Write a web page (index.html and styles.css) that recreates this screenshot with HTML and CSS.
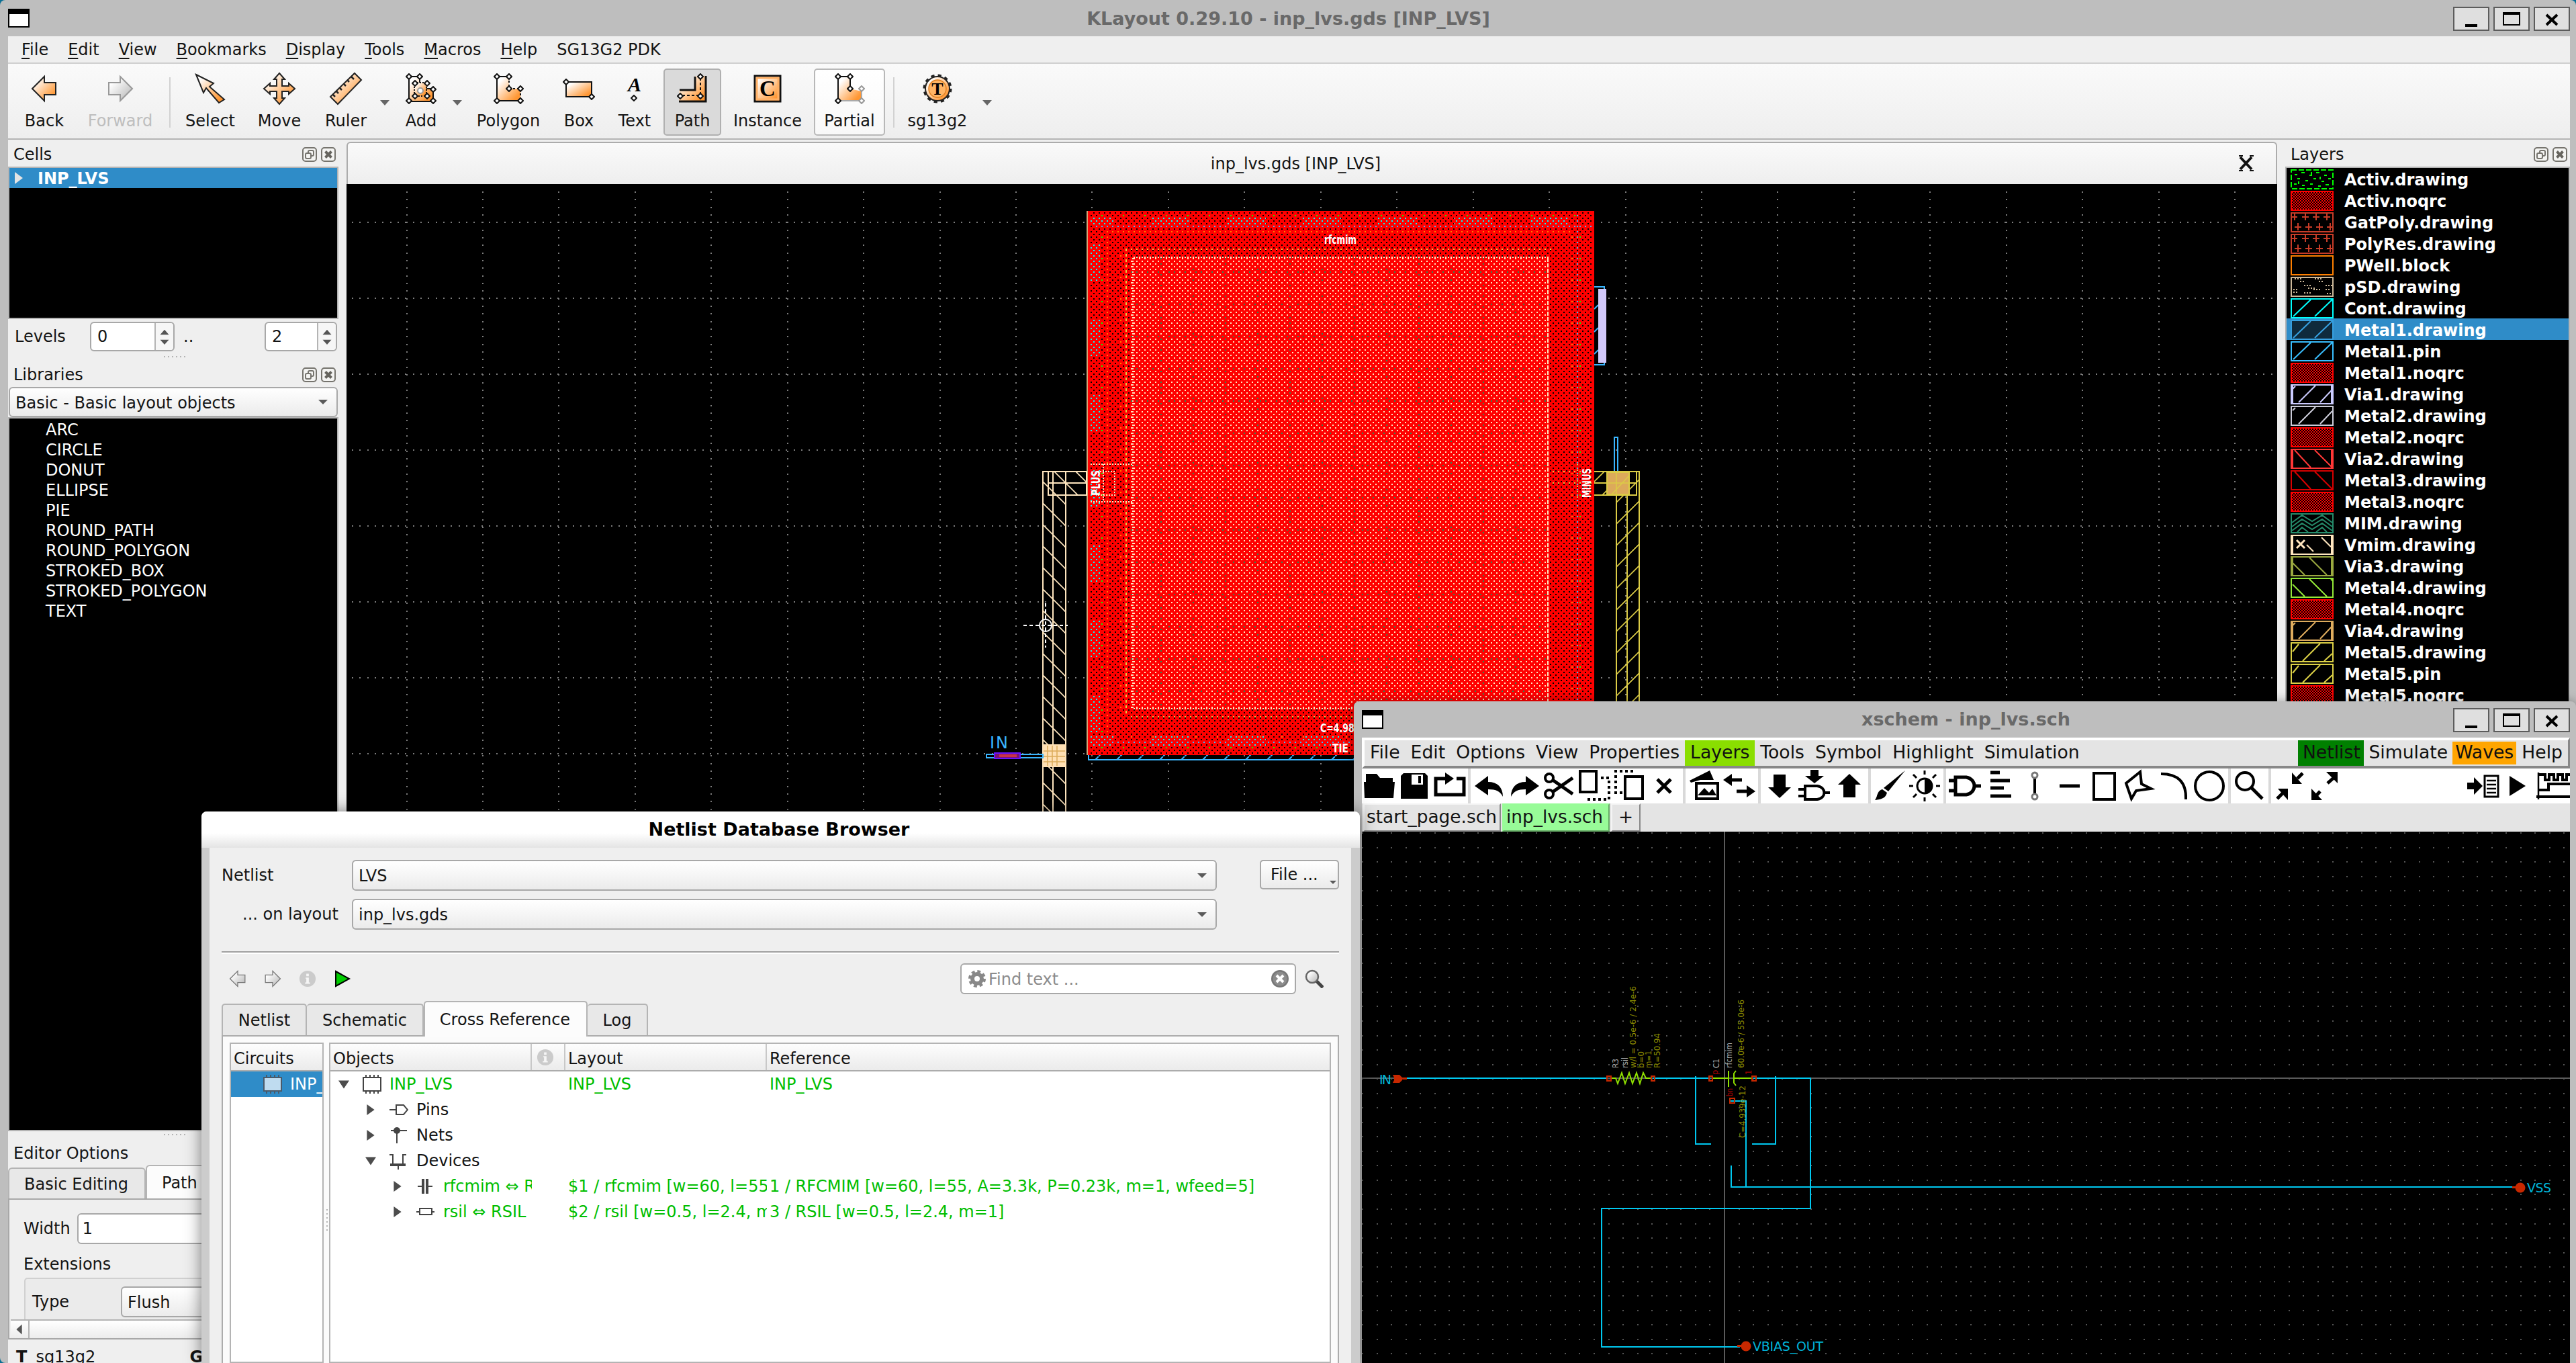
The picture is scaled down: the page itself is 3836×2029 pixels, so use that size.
FILE: index.html
```html
<!DOCTYPE html>
<html lang="en">
<head>
<meta charset="utf-8">
<title>KLayout 0.29.10 - inp_lvs.gds [INP_LVS]</title>
<link rel="stylesheet" href="styles.css">
</head>
<body>
<svg class="defs" aria-hidden="true">
  <defs>
    <linearGradient id="og" x1="0" y1="0" x2="1" y2="1"><stop offset="0.15" stop-color="#fff"/><stop offset="0.85" stop-color="#ff9632"/></linearGradient>
    <linearGradient id="gg" x1="0" y1="0" x2="1" y2="1"><stop offset="0.2" stop-color="#fff"/><stop offset="0.9" stop-color="#bbb"/></linearGradient>
    <pattern id="p-chk" width="8" height="4" patternUnits="userSpaceOnUse"><path d="M0 0h2v2h-2zM4 0h2v2h-2zM2 2h2v2h-2zM6 2h2v2h-2z" fill="#f00"/></pattern>
    <symbol id="float" viewBox="0 0 22 22"><rect x="1" y="1" width="20" height="20" rx="4" fill="#f4f4f2" stroke="#76746e" stroke-width="2"/><rect x="9" y="5" width="8" height="8" rx="2" fill="none" stroke="#76746e" stroke-width="2"/><rect x="5" y="9" width="8" height="8" rx="2" fill="#f4f4f2" stroke="#76746e" stroke-width="2"/></symbol>
    <symbol id="shut" viewBox="0 0 22 22"><rect x="1" y="1" width="20" height="20" rx="4" fill="#f4f4f2" stroke="#76746e" stroke-width="2"/><path d="M6.500 6.500l9 9M15.500 6.500l-9 9" stroke="#66645e" stroke-width="4"/></symbol>
    <symbol id="s-noqrc" viewBox="0 0 64 30"><rect width="64" height="30" fill="url(#p-chk)" shape-rendering="crispEdges"/><rect x="1" y="1" width="62" height="28" fill="none" stroke="#f00" stroke-width="2"/></symbol>
    <symbol id="s-poly" viewBox="0 0 64 30"><g stroke="#c83c28" stroke-width="2" fill="none"><rect x="1" y="1" width="62" height="28"/><path d="M2 7h8M6 2v10M17 7h10M22 2v10M33 7h10M38 2v10M49 7h10M54 2v10M6 22h10M11 16v11M22 22h10M27 16v11M38 22h10M43 16v11M54 22h8M59 16v11"/></g></symbol>
    <symbol id="s-up" viewBox="0 0 64 30"><rect x="1" y="1" width="62" height="28"/><path d="M4 27L30 2M36 27L62 2"/></symbol>
    <symbol id="s-up2" viewBox="0 0 64 30"><rect x="1" y="1" width="62" height="28"/><path d="M12 27L37 2M44 27L62 8M3 7L7 3"/></symbol>
    <symbol id="s-up3" viewBox="0 0 64 30"><rect x="1" y="1" width="62" height="28"/><path d="M18 28L44 2M50 28L62 17M3 14L12 3"/></symbol>
    <symbol id="s-dn" viewBox="0 0 64 30"><rect x="1" y="1" width="62" height="28"/><path d="M6 2L30 28M36 2L62 28"/></symbol>
    <symbol id="s-dn2" viewBox="0 0 64 30"><rect x="1" y="1" width="62" height="28"/><path d="M3 10L21 28M28 2L54 28M60 2l3 3"/></symbol>
    <symbol id="s-side" viewBox="0 0 64 30"><path d="M2 0v30M62 0v30" stroke-width="4"/></symbol>
    <symbol id="wm" viewBox="0 0 54 36"><rect x="1" y="1" width="52" height="34" fill="#dfdfdf" stroke="#5c5c5c" stroke-width="2"/></symbol>
    <symbol id="left" viewBox="0 0 40 44"><path d="M2 22L20 4v9h17v18H20v9z" stroke-width="2"/></symbol>
    <symbol id="right" viewBox="0 0 40 44"><path d="M38 22L20 4v9H3v18h17v9z" stroke-width="2"/></symbol>
    <symbol id="node" viewBox="0 0 10 10"><path d="M5 1l4 4-4 4-4-4z" stroke-width="2" fill="#fff"/></symbol>
    <symbol id="info" viewBox="0 0 28 28"><circle cx="14" cy="14" r="13" fill="#cbcbcb"/><path d="M12 6h4v4h-4zM11 12h5v8h2v2h-8v-2h2v-6h-1z" fill="#f6f6f6"/></symbol>
  </defs>
</svg>

<section class="klayout">
  <header class="titlebar">
    <span class="sysmenu"></span>
    <h1 class="title">KLayout 0.29.10 - inp_lvs.gds [INP_LVS]</h1>
    <div class="winbtns">
      <svg class="winbtn"><use href="#wm"/><path d="M18 26h18v4h-18z"/></svg>
      <svg class="winbtn"><use href="#wm"/><path d="M14 8h26v20h-26zM16 12v14h22v-14z" fill-rule="evenodd"/></svg>
      <svg class="winbtn"><use href="#wm"/><path d="M19 12l16 15M35 12l-16 15" stroke="#000" stroke-width="4"/></svg>
    </div>
  </header>
  <nav class="menubar"><span><u>F</u>ile</span><span><u>E</u>dit</span><span><u>V</u>iew</span><span><u>B</u>ookmarks</span><span><u>D</u>isplay</span><span><u>T</u>ools</span><span><u>M</u>acros</span><span><u>H</u>elp</span><span>SG13G2 PDK</span></nav>
  <div class="toolbar">
    <div class="tool"><svg class="ti" viewBox="0 0 44 44"><use href="#left" x="2" width="40" height="44" fill="url(#og)" stroke="#222"/></svg>Back</div>
    <div class="tool off"><svg class="ti" viewBox="0 0 44 44"><use href="#right" x="2" width="40" height="44" fill="url(#gg)" stroke="#999"/></svg>Forward</div>
    <i class="tsep"></i>
    <div class="tool"><svg class="ti" viewBox="0 0 44 44"><path d="M1 1l26 13-6 5 22 19-8 5-19-22-4 7z" fill="url(#og)" stroke="#222" stroke-width="2"/></svg>Select</div>
    <div class="tool"><svg class="ti wide" viewBox="0 0 48 48"><path d="M24 1l8 9h-4v10h10v-4l9 8-9 8v-4H28v10h4l-8 9-8-9h4V28H10v4l-9-8 9-8v4h10V10h-4z" fill="url(#og)" stroke="#222" stroke-width="2"/></svg>Move</div>
    <div class="tool"><svg class="ti wide" viewBox="0 0 48 48"><path d="M37 1l10 10L12 47 1 36z" fill="url(#og)" stroke="#222" stroke-width="2"/><path d="M32 6l4 4M26 11l3 3M21 17l3 3M15 23l3 3M10 28l3 3M5 33l3 3" stroke="#222" stroke-width="2.500"/></svg>Ruler</div>
    <i class="drop"></i>
    <div class="tool"><svg class="ti" viewBox="0 0 44 44"><g stroke="#111" fill="url(#og)"><path d="M4 4h16v18h20v19H4z" stroke-width="2"/><path d="M12 13h18v20h-18z" stroke-dasharray="2 2" stroke-width="2"/><circle cx="21" cy="25" r="4" stroke="#999" stroke-width="2" fill="#fff"/><use href="#node" x="-1" y="-1" width="10" height="10"/><use href="#node" x="15" y="-1" width="10" height="10"/><use href="#node" x="35" y="18" width="10" height="10"/><use href="#node" x="-1" y="35" width="10" height="10"/><use href="#node" x="35" y="35" width="10" height="10"/><use href="#node" x="8" y="9" width="10" height="10"/><use href="#node" x="26" y="9" width="10" height="10"/><use href="#node" x="8" y="28" width="10" height="10"/><use href="#node" x="26" y="28" width="10" height="10"/></g></svg>Add</div>
    <i class="drop"></i>
    <div class="tool"><svg class="ti" viewBox="0 0 44 44"><g stroke="#111"><path d="M6 4h17v18h17v18H6z" fill="url(#og)" stroke="none"/><path d="M23 4H5v36h35" fill="none" stroke-width="2"/><path d="M5 4h18v18h17v18" fill="none" stroke-width="2" stroke-dasharray="3 3"/><use href="#node" x="0" y="-1" width="10" height="10"/><use href="#node" x="18" y="-1" width="10" height="10"/><use href="#node" x="18" y="17" width="10" height="10"/><use href="#node" x="35" y="17" width="10" height="10"/><use href="#node" x="0" y="35" width="10" height="10"/><use href="#node" x="35" y="35" width="10" height="10"/></g></svg>Polygon</div>
    <div class="tool"><svg class="ti" viewBox="0 0 44 44"><g stroke="#111"><rect x="3" y="12" width="38" height="22" fill="url(#og)" stroke-width="2"/><use href="#node" x="-2" y="7" width="10" height="10"/><use href="#node" x="36" y="29" width="10" height="10"/></g></svg>Box</div>
    <div class="tool"><svg class="ti" viewBox="0 0 44 44"><text x="22" y="26" class="glyph-a">A</text><g stroke="#111"><use href="#node" x="16" y="31" width="10" height="10"/></g></svg>Text</div>
    <div class="tool pressed"><svg class="ti" viewBox="0 0 44 44"><path d="M26 3h16v38H2V24h24z" fill="url(#og)"/><path d="M26 4v20H3M42 3v38H2" fill="none" stroke="#111" stroke-width="3"/><path d="M34 6v26H4" fill="none" stroke="#111" stroke-width="2" stroke-dasharray="4 3"/><g stroke="#111"><use href="#node" x="29" y="-1" width="10" height="10"/><use href="#node" x="29" y="28" width="10" height="10"/><use href="#node" x="-1" y="28" width="10" height="10"/></g></svg>Path</div>
    <div class="tool"><svg class="ti" viewBox="0 0 44 44"><rect x="3" y="3" width="38" height="38" fill="url(#og)" stroke="#111" stroke-width="3"/><rect x="6" y="6" width="32" height="32" fill="none" stroke="#ffb066" stroke-width="3"/><text x="22" y="33" class="glyph-c">C</text></svg>Instance</div>
    <div class="tool raised"><svg class="ti" viewBox="0 0 44 44"><path d="M6 4h17v18l17 4v14H6z" fill="url(#og)"/><path d="M40 22V40H6" fill="none" stroke="#aaa" stroke-width="2"/><path d="M5 40V4h18v18" fill="none" stroke="#111" stroke-width="2"/><g stroke="#111"><use href="#node" x="0" y="-1" width="10" height="10"/><use href="#node" x="18" y="-1" width="10" height="10"/><use href="#node" x="18" y="17" width="10" height="10"/><use href="#node" x="0" y="35" width="10" height="10"/></g><g stroke="#999"><use href="#node" x="35" y="17" width="10" height="10"/><use href="#node" x="35" y="35" width="10" height="10"/></g></svg>Partial</div>
    <i class="tsep"></i>
    <div class="tool"><svg class="ti" viewBox="0 0 44 44"><circle cx="22" cy="22" r="19" fill="none" stroke="#222" stroke-width="5" stroke-dasharray="5 4.950"/><circle cx="22" cy="22" r="18" fill="url(#og)" stroke="#222" stroke-width="2"/><circle cx="22" cy="22" r="13" fill="#ffb566" stroke="#e08020" stroke-width="1.500"/><text x="22" y="31" class="glyph-t">T</text></svg>sg13g2</div>
    <i class="drop"></i>
  </div>

  <div class="work">
    <aside class="dock left">
      <div class="dockhead">Cells<span><svg><use href="#float"/></svg><svg><use href="#shut"/></svg></span></div>
      <div class="cells"><div class="cellrow"><svg viewBox="0 0 12 18"><path d="M0 0l12 9-12 9z" fill="#e4e4e4"/></svg>INP_LVS</div></div>
      <div class="levels"><span class="lbl">Levels</span><div class="spin a"><b>0</b><svg viewBox="0 0 28 40"><path d="M14 9l7 8H7zM14 33l7-8H7z" fill="#555"/></svg></div><span class="dots">..</span><div class="spin b"><b>2</b><svg viewBox="0 0 28 40"><path d="M14 9l7 8H7zM14 33l7-8H7z" fill="#555"/></svg></div></div>
      <div class="grip"></div>
      <div class="dockhead lib">Libraries<span><svg><use href="#float"/></svg><svg><use href="#shut"/></svg></span></div>
      <div class="combo">Basic - Basic layout objects<i class="tri"></i></div>
      <ul class="liblist"><li>ARC</li><li>CIRCLE</li><li>DONUT</li><li>ELLIPSE</li><li>PIE</li><li>ROUND_PATH</li><li>ROUND_POLYGON</li><li>STROKED_BOX</li><li>STROKED_POLYGON</li><li>TEXT</li></ul>
      <div class="grip low"></div>
      <div class="dockhead ed">Editor Options</div>
      <div class="edtabs"><span>Basic Editing</span><span class="on">Path</span></div>
      <div class="edpane">
        <div class="edrow"><span>Width</span><div class="input">1</div></div>
        <div class="edext">Extensions</div>
        <div class="edgroup"><span>Type</span><div class="combo">Flush</div></div>
        <div class="hscroll"><svg viewBox="0 0 28 28"><path d="M18 6v16L9 14z" fill="#555"/></svg></div>
      </div>
      <div class="status"><b>T</b><span>sg13g2</span><b class="g">G</b></div>
    </aside>

    <main class="view">
      <div class="viewtab"><span>inp_lvs.gds [INP_LVS]</span><svg viewBox="0 0 24 24"><path d="M3 3L20 21M20 3L3 21" stroke="#111" stroke-width="4"/><path d="M1 1h6M17 1h6M1 23h6M17 23h6" stroke="#111" stroke-width="2"/></svg></div>
      <svg class="layout" viewBox="516 274 2875 1755">
        <defs>
          <pattern id="pk" width="8" height="8" patternUnits="userSpaceOnUse"><path d="M0 0h2v2h-2zM4 4h2v2h-2z" fill="#000"/></pattern>
          <pattern id="pc" width="8" height="8" patternUnits="userSpaceOnUse"><path d="M0 0h2v2h-2zM4 4h2v2h-2z" fill="#00ffff"/></pattern>
          <pattern id="pw" width="8" height="8" patternUnits="userSpaceOnUse"><rect width="8" height="8" fill="#f00"/><path d="M0 0h2v2h-2zM4 4h2v2h-2z" fill="#ffe6bf"/></pattern>
          <pattern id="pm" width="96" height="96" patternUnits="userSpaceOnUse"><path d="M0 0h2v2h-2zM0 8h2v2h-2zM0 24h2v2h-2zM0 40h2v2h-2zM0 56h2v2h-2zM0 72h2v2h-2zM0 88h2v2h-2zM48 16h2v2h-2zM48 32h2v2h-2zM48 56h2v2h-2zM48 80h2v2h-2zM12 20h2v2h-2zM20 20h2v2h-2zM36 20h2v2h-2zM52 20h2v2h-2zM60 20h2v2h-2zM76 20h2v2h-2zM92 20h2v2h-2zM12 68h2v2h-2zM28 68h2v2h-2zM44 68h2v2h-2zM60 68h2v2h-2zM84 68h2v2h-2z" fill="#288c5a"/></pattern>
          <pattern id="hd" width="32" height="32" x="1552" y="716" patternUnits="userSpaceOnUse"><path d="M0 0L32 32M-1 31l2 2M31 -1l2 2" stroke="#ffe6bf" stroke-width="1.600"/></pattern>
          <pattern id="hu" width="32" height="32" x="2407" y="716" patternUnits="userSpaceOnUse"><path d="M0 32L32 0M-1 1l2-2M31 33l2-2" stroke="#dccc46" stroke-width="1.600"/></pattern>
          <pattern id="hb" width="32" height="32" x="1636" y="1094" patternUnits="userSpaceOnUse"><path d="M0 32L32 0" stroke="#3ab6ff" stroke-width="2"/></pattern>
        </defs>
        <rect x="516" y="274" width="2875" height="1755" fill="#000"/>
        <path id="grid" fill="none" stroke="#7d7d7d" stroke-width="2" stroke-dasharray="2 9.340" shape-rendering="crispEdges"/>
        <g shape-rendering="crispEdges">
          <rect x="1618" y="314" width="756" height="810" fill="#f00"/>
          <rect x="1618" y="314" width="2" height="810" fill="#d2a679"/>
          <rect x="1624" y="316" width="748" height="806" fill="url(#pk)"/>
          <path id="contacts"/>
          <g fill="none" stroke-width="2">
            <path d="M1640 321H2370M1641 352V1110M2353 352V1110M1640 1113H2370" stroke="#0f0" stroke-dasharray="2 30"/>
            <path d="M1632 337H2370M2349 320V1110M1632 1105H2370" stroke="#3ab6ff" stroke-dasharray="2 6"/>
            <path d="M1648 345H2340M1649 352V1092" stroke="#ff7a00" stroke-dasharray="2 6"/>
            <path d="M1684 1097H2340M2341 352V1092M1669 380V1060" stroke="#ff7a00" stroke-dasharray="2 30"/>
            <path d="M1676 371H2314M1684 1067H2314" stroke="#d8cc46" stroke-dasharray="2 6"/>
            <path d="M1677 370V1064" stroke="#d8cc46" stroke-dasharray="4 4"/>
          </g>
          <rect x="1684" y="382" width="624" height="674" fill="url(#pw)"/>
          <rect x="1684" y="382" width="624" height="674" fill="url(#pm)"/>
          <path d="M1688 383H2306M1687 384V1055M1688 1055H2306" fill="none" stroke="#ffe6bf" stroke-width="2" stroke-dasharray="2 2"/>
          <path d="M2305 384V1056" stroke="#ffe6bf" stroke-width="2" stroke-dasharray="6 2"/>
          <g fill="none" stroke="#ffe6bf" stroke-width="2" stroke-dasharray="2 2"><path d="M1624 691H1686M1624 747H1686M1634 702H1660V737H1634M1643 691v56"/></g>
          <path d="M2312 702H2372M2312 719H2372M2349 691V747" fill="none" stroke="#d8cc46" stroke-width="2" stroke-dasharray="2 6"/>
        </g>
        <g class="cap">
          <text x="1972" y="363" textLength="48" lengthAdjust="spacingAndGlyphs">rfcmim</text>
          <text x="1966" y="1090" textLength="68" lengthAdjust="spacingAndGlyphs">C=4.985e</text>
          <text x="1984" y="1120" textLength="24" lengthAdjust="spacingAndGlyphs">TIE</text>
          <text transform="translate(1638 738) rotate(-90)" textLength="38" lengthAdjust="spacingAndGlyphs">PLUS</text>
          <text transform="translate(2369 741) rotate(-90)" textLength="44" lengthAdjust="spacingAndGlyphs">MINUS</text>
        </g>
        <g fill="none" stroke="#ffe6bf" stroke-width="2">
          <path d="M1553 702H1618V737H1587V1230H1553z" fill="url(#hd)"/>
          <path d="M1568 737V1230M1561 702V737H1587M1561 719H1618M1568 702v35M1587 702v35"/>
        </g>
        <rect x="1553" y="1108" width="34" height="34" fill="#ffe0b4"/>
        <path d="M1560 1110v30M1567 1110v30M1574 1110v30M1554 1118h32M1554 1126h32M1554 1134h32" stroke="#dcaa5a" stroke-width="1.500"/>
        <g fill="none" stroke="#3ab6ff" stroke-width="2">
          <rect x="1469" y="1123" width="84" height="5"/>
          <path d="M1621 1124v7H2030" fill="none"/><rect x="1621" y="1124" width="410" height="6" fill="url(#hb)" stroke="none"/>
          <path d="M2374 427h15v116h-15M2374 460l6-6M2374 494l6-6M2374 527l6-6"/>
          <rect x="2404" y="651" width="5" height="51"/>
        </g>
        <rect x="1481" y="1121" width="38" height="8" fill="#7a1470" stroke="#6a14ff" stroke-width="2"/>
        <path d="M1488 1125h26" stroke="#c8324a" stroke-width="4"/>
        <text x="1474" y="1114" class="inlabel" textLength="27">IN</text>
        <rect x="2380" y="430" width="12" height="110" fill="#d2c8fa"/>
        <g fill="none" stroke="#dccc46" stroke-width="2">
          <path d="M2374 702H2441V1060H2407V737H2374" fill="url(#hu)"/>
          <path d="M2374 719H2437M2423 737V1060M2437 702V737H2400"/>
          <rect x="2393" y="703" width="33" height="33" fill="#dcaa5a"/>
          <path d="M2393 719h33M2400 736l26-28M2407 703v33" stroke-width="1.500"/>
        </g>
        <g fill="none" stroke="#fff" stroke-width="2"><circle cx="1557" cy="931" r="9"/><path d="M1524 931h66M1557 898v66" stroke-dasharray="5 4"/></g>
      </svg>
    </main>

    <aside class="dock right">
      <div class="dockhead">Layers<span><svg><use href="#float"/></svg><svg><use href="#shut"/></svg></span></div>
      <ul class="layers">
        <li><svg class="c-act" viewBox="0 0 64 30"><rect x="1" y="1" width="62" height="28" stroke-dasharray="8 3"/><path d="M6 8h4M16 5h5M28 9h4M38 5h5M50 9h4M10 14h4M22 17h4M34 14h4M46 18h4M56 14h4M5 22h4M17 24h4M29 22h4M41 25h4M52 23h5M31 4v4M12 18v4M44 11v4"/></svg>Activ.drawing</li>
        <li><svg><use href="#s-noqrc"/></svg>Activ.noqrc</li>
        <li><svg><use href="#s-poly"/></svg>GatPoly.drawing</li>
        <li><svg><use href="#s-poly"/></svg>PolyRes.drawing</li>
        <li><svg class="c-well" viewBox="0 0 64 30"><rect x="1" y="1" width="62" height="28"/></svg>PWell.block</li>
        <li><svg class="c-psd" viewBox="0 0 64 30"><rect x="1" y="1" width="62" height="28"/><path d="M6 3h10M14 7h8M36 3h12M42 7h8M20 13h12M26 17h12M52 13h10M4 19h8M4 23h6M34 19h10M20 24h10M52 19h8M54 25h8" stroke-dasharray="2 2"/></svg>pSD.drawing</li>
        <li><svg class="c-cont"><use href="#s-up"/></svg>Cont.drawing</li>
        <li class="sel"><svg class="c-m1"><use href="#s-up"/></svg>Metal1.drawing</li>
        <li><svg class="c-m1"><use href="#s-up"/></svg>Metal1.pin</li>
        <li><svg><use href="#s-noqrc"/></svg>Metal1.noqrc</li>
        <li><svg class="c-v1"><use href="#s-up2"/><use href="#s-side"/></svg>Via1.drawing</li>
        <li><svg class="c-m2"><use href="#s-up2"/></svg>Metal2.drawing</li>
        <li><svg><use href="#s-noqrc"/></svg>Metal2.noqrc</li>
        <li><svg class="c-v2"><use href="#s-dn"/><use href="#s-side"/></svg>Via2.drawing</li>
        <li><svg class="c-m3"><use href="#s-dn"/></svg>Metal3.drawing</li>
        <li><svg><use href="#s-noqrc"/></svg>Metal3.noqrc</li>
        <li><svg class="c-mim" viewBox="0 0 64 30"><rect x="1" y="1" width="62" height="28"/><path d="M2 14L17 3L32 12L47 3L62 14M2 20L17 9L32 18L47 9L62 20M2 26L17 15L32 24L47 15L62 26M10 28L17 21L26 28M38 28L47 21L54 28"/></svg>MIM.drawing</li>
        <li><svg class="c-vm" viewBox="0 0 64 30"><use href="#s-side"/><rect x="1" y="1" width="62" height="28"/><path d="M46 4L60 18M24 15l10 10"/><path d="M9 8l12 12M21 8L9 20" stroke-width="3"/></svg>Vmim.drawing</li>
        <li><svg class="c-v3"><use href="#s-dn2"/><use href="#s-side"/></svg>Via3.drawing</li>
        <li><svg class="c-m4"><use href="#s-dn2"/></svg>Metal4.drawing</li>
        <li><svg><use href="#s-noqrc"/></svg>Metal4.noqrc</li>
        <li><svg class="c-v4"><use href="#s-up2"/><use href="#s-side"/></svg>Via4.drawing</li>
        <li><svg class="c-m5"><use href="#s-up3"/></svg>Metal5.drawing</li>
        <li><svg class="c-m5"><use href="#s-up3"/></svg>Metal5.pin</li>
        <li><svg><use href="#s-noqrc"/></svg>Metal5.noqrc</li>
      </ul>
    </aside>
  </div>
</section>

<section class="xschem">
  <header class="titlebar">
    <span class="sysmenu"></span>
    <h2 class="title">xschem - inp_lvs.sch</h2>
    <div class="winbtns">
      <svg class="winbtn"><use href="#wm"/><path d="M18 26h18v4h-18z"/></svg>
      <svg class="winbtn"><use href="#wm"/><path d="M14 8h26v20h-26zM16 12v14h22v-14z" fill-rule="evenodd"/></svg>
      <svg class="winbtn"><use href="#wm"/><path d="M19 12l16 15M35 12l-16 15" stroke="#000" stroke-width="4"/></svg>
    </div>
  </header>
  <div class="xbody">
    <nav class="xmenu"><span>File</span><span>Edit</span><span>Options</span><span>View</span><span>Properties</span><span class="lay">Layers</span><span>Tools</span><span>Symbol</span><span>Highlight</span><span>Simulation</span><i></i><span class="net">Netlist</span><span class="sim">Simulate</span><span class="wav">Waves</span><span>Help</span></nav>
    <div class="xtools">
      <svg viewBox="0 0 52 52"><path d="M6 8h16l5 6h19v6H6zM3 20h46l-2 24H4z"/></svg>
      <svg viewBox="0 0 52 52"><path d="M6 11l4-4h32l4 4v34H6zM22 9v15h17V9zM32 11v11h4V11z" fill-rule="evenodd"/></svg>
      <svg viewBox="0 0 52 52"><path d="M20 15H6v24h42V15H37" class="l5"/><path d="M20 6l13 9-13 9z"/></svg>
      <i></i>
      <svg viewBox="0 0 52 52"><path d="M4 26L24 11v9c14 0 22 8 22 22-4-8-10-11-22-11v9z"/></svg>
      <svg viewBox="0 0 52 52"><path d="M48 26L28 11v9C14 20 6 28 6 42c4-8 10-11 22-11v9z"/></svg>
      <svg viewBox="0 0 52 52"><circle cx="11" cy="14" r="6" class="l4"/><circle cx="11" cy="38" r="6" class="l4"/><path d="M16 17l30 21M16 35l30-21" class="l5"/></svg>
      <svg viewBox="0 0 52 52"><rect x="5" y="4" width="24" height="31" class="l4"/><path d="M36 14h12v32H18v-6" class="l4" stroke-dasharray="4 4"/></svg>
      <svg viewBox="0 0 52 52"><rect x="20" y="12" width="26" height="33" class="l4"/><path d="M32 4H6v32h10" class="l4" stroke-dasharray="4 4"/></svg>
      <svg viewBox="0 0 52 52"><path d="M16 16l20 20M36 16L16 36" class="l5"/></svg>
      <i></i>
      <svg viewBox="0 0 52 52"><path d="M4 18L34 3l6 14H20l-14 4z"/><rect x="14" y="22" width="32" height="23" class="l4"/><path d="M16 40l10-11 7 7 5-6 6 10z"/></svg>
      <svg viewBox="0 0 52 52"><path d="M14 17h16M22 34h16" class="l5"/><path d="M2 17l13-9v18zM50 34l-13-9v18z"/></svg>
      <i></i>
      <svg viewBox="0 0 52 52"><path d="M17 9h18v19h8L26 44 9 28h8z"/></svg>
      <svg viewBox="0 0 52 52"><path d="M20 2h12v9h8L26 22 12 11h8z"/><path d="M12 26h18c14 2 14 18 0 20H12zM2 31h10M2 41h10M40 36h9" class="l4"/></svg>
      <svg viewBox="0 0 52 52"><path d="M17 43h18V24h8L26 8 9 24h8z"/></svg>
      <i></i>
      <svg viewBox="0 0 52 52"><path d="M49 3L24 34l-7-5zM15 31l7 5c-2 8-8 10-18 11 4-5 3-14 11-16z"/></svg>
      <svg viewBox="0 0 52 52"><circle cx="26" cy="26" r="11" class="l3"/><path d="M26 14a12 12 0 0 1 0 24z"/><path d="M26 3v6M26 43v6M3 26h6M43 26h6M9 9l5 5M38 38l5 5M43 9l-5 5M9 43l5-5" class="l3"/></svg>
      <i></i>
      <svg viewBox="0 0 52 52"><path d="M12 13h16c16 3 16 23 0 26H12zM2 18h10M2 33h10M41 26h9" class="l5"/></svg>
      <svg viewBox="0 0 52 52"><path d="M12 6h14M12 18h29M12 29h20M12 41h31" class="l5"/></svg>
      <svg viewBox="0 0 52 52"><path d="M26 14v24" class="l4"/><circle cx="26" cy="10" r="4" class="l3 gr"/><circle cx="26" cy="42" r="4" class="l3 gr"/></svg>
      <svg viewBox="0 0 52 52"><path d="M11 26h30" class="l5"/></svg>
      <svg viewBox="0 0 52 52"><rect x="10" y="7" width="31" height="39" class="l4"/></svg>
      <svg viewBox="0 0 52 52"><path d="M27 5l2 18 14 7-22 3-7 12L6 22z" class="l4"/></svg>
      <svg viewBox="0 0 52 52"><path d="M6 8c25 0 38 12 37 38" class="l4"/></svg>
      <svg viewBox="0 0 52 52"><circle cx="26" cy="26" r="21" class="l4"/></svg>
      <i></i>
      <svg viewBox="0 0 52 52"><circle cx="19" cy="19" r="13" class="l4"/><path d="M28 28l17 17" class="l5"/></svg>
      <i></i>
      <svg viewBox="0 0 52 52"><path d="M45 7l-8 8M7 45l8-8" class="l5"/><path d="M29 6v17h15zM8 30h15v17z"/></svg>
      <svg viewBox="0 0 52 52"><path d="M30 22l9-8M9 45l10-11" class="l5"/><path d="M28 5h17v17zM6 30v17h16z"/></svg>
      <b></b>
      <svg viewBox="0 0 52 52"><path d="M3 21h10v-8l13 13-13 13v-8H3z"/><rect x="29" y="11" width="20" height="31" class="l3"/><path d="M32 18h14M32 24h14M32 30h14M32 36h14" class="l2"/></svg>
      <svg viewBox="0 0 52 52"><path d="M14 11l24 15-24 15z"/></svg>
      <svg viewBox="0 0 52 52"><path d="M5 6v40" class="l2"/><path d="M2 42h50M5 32h15V23h32M5 9h10v8h6V9h7v8h6V9h7v8h6V9h5" class="l4"/></svg>
    </div>
    <div class="xtabs"><span>start_page.sch</span><span class="on">inp_lvs.sch</span><span class="plus">+</span></div>
    <svg class="sch" viewBox="2028 1238 1799 791">
      <rect x="2028" y="1238" width="1799" height="791" fill="#000"/>
      <path id="dots" fill="none" stroke="#555" stroke-width="2" stroke-dasharray="2 19.560" shape-rendering="crispEdges"/>
      <path d="M2568 1238V2029M2028 1605H3827" stroke="#5a5a5a" stroke-width="2"/>
      <g fill="none" stroke="#00c8f0" stroke-width="2">
        <path d="M2094 1605H2393M2461 1605H2547M2611 1605H2696V1799H2385V2005H2591M2525 1602V1703H2548M2644 1602V1703H2609M2577 1639H2600V1767M2578 1735V1767H3746"/>
      </g>
      <g fill="none" stroke="#8fe000" stroke-width="2"><path d="M2400 1605h6l3 8 6-16 5 16 6-16 5 16 6-16 5 16 5-16 4 8h8M2550 1605h24M2574 1594v24M2585 1594l-3 4v14l3 4M2582 1605h27"/></g>
      <g fill="none" stroke="#c82800" stroke-width="2"><rect x="2393" y="1602" width="6" height="7"/><rect x="2459" y="1602" width="5" height="7"/><rect x="2545" y="1602" width="5" height="7"/><rect x="2609" y="1602" width="6" height="7"/><rect x="2576" y="1635" width="7" height="7"/></g>
      <g fill="#c82800"><path d="M2074 1600h10l4 4v4l-4 4h-10l2-4v-4zM2088 1604h7v3h-7z"/><circle cx="2600" cy="2004" r="7.500"/><path d="M2587 2002h6v3h-6z"/><circle cx="3753" cy="1768" r="7.500"/><path d="M3741 1766h6v3h-6z"/></g>
      <g class="pins"><text x="2054" y="1614" textLength="18">IN</text><text x="2610" y="2011" textLength="105">VBIAS_OUT</text><text x="3763" y="1775" textLength="36">VSS</text></g>
      <g class="ann y"><text transform="translate(2436 1590) rotate(-90)" textLength="122" lengthAdjust="spacingAndGlyphs">w/l = 0.5e-6 / 2.4e-6</text><text transform="translate(2448 1590) rotate(-90)" textLength="25" lengthAdjust="spacingAndGlyphs">b=0</text><text transform="translate(2459 1590) rotate(-90)" textLength="26" lengthAdjust="spacingAndGlyphs">m=1</text><text transform="translate(2472 1590) rotate(-90)" textLength="52" lengthAdjust="spacingAndGlyphs">R=50.94</text><text transform="translate(2597 1590) rotate(-90)" textLength="102" lengthAdjust="spacingAndGlyphs">60.0e-6 / 55.0e-6</text><text transform="translate(2599 1694) rotate(-90)" textLength="78" lengthAdjust="spacingAndGlyphs">C=4.939e-12</text></g>
      <g class="ann w"><text transform="translate(2410 1590) rotate(-90)" textLength="14" lengthAdjust="spacingAndGlyphs">R3</text><text transform="translate(2424 1590) rotate(-90)" textLength="16" lengthAdjust="spacingAndGlyphs">rsil</text><text transform="translate(2560 1590) rotate(-90)" textLength="14" lengthAdjust="spacingAndGlyphs">C1</text><text transform="translate(2579 1590) rotate(-90)" textLength="38" lengthAdjust="spacingAndGlyphs">rfcmim</text></g>
      <g class="ann r"><text transform="translate(2558 1600) rotate(-90)">p</text><text transform="translate(2608 1600) rotate(-90)">1</text><text transform="translate(2580 1632) rotate(-90)" textLength="12" lengthAdjust="spacingAndGlyphs">bn</text></g>
    </svg>
  </div>
</section>

<section class="netlist">
  <header class="ntitle">Netlist Database Browser</header>
  <div class="nbody">
    <div class="frow"><label>Netlist</label><div class="combo">LVS<i class="tri"></i></div><div class="filebtn">File ...<i class="tri sm"></i></div></div>
    <div class="frow two"><label>... on layout</label><div class="combo">inp_lvs.gds<i class="tri"></i></div></div>
    <hr>
    <div class="nbar">
      <svg viewBox="0 0 28 28"><use href="#left" width="28" height="28" fill="url(#gg)" stroke="#777"/></svg>
      <svg viewBox="0 0 28 28"><use href="#right" width="28" height="28" fill="url(#gg)" stroke="#777"/></svg>
      <svg viewBox="0 0 28 28"><use href="#info" width="26" height="26" x="1" y="1"/></svg>
      <svg viewBox="0 0 28 28"><path d="M4 3l20 11L4 25z" fill="#0c0" stroke="#000" stroke-width="2"/></svg>
      <div class="find">
        <svg viewBox="0 0 28 28"><circle cx="14" cy="14" r="10.500" fill="none" stroke="#888" stroke-width="5" stroke-dasharray="4.600 3.650"/><circle cx="14" cy="14" r="7" fill="none" stroke="#888" stroke-width="6"/></svg>
        <span>Find text ...</span>
        <svg viewBox="0 0 28 28"><circle cx="14" cy="14" r="13" fill="#777"/><circle cx="14" cy="14" r="10.500" fill="#8c8c8c"/><path d="M9 9l10 10M19 9L9 19" stroke="#fff" stroke-width="4"/></svg>
      </div>
      <svg class="mag" viewBox="0 0 28 28"><path d="M17 17l10 10" stroke="#444" stroke-width="5"/><circle cx="11" cy="11" r="9" fill="url(#gg)" stroke="#666" stroke-width="2.500"/></svg>
    </div>
    <div class="ntabs"><span class="a">Netlist</span><span class="b">Schematic</span><span class="c on">Cross Reference</span><span class="d">Log</span></div>
    <div class="npane">
      <div class="circuits"><div class="thead">Circuits</div><div class="crow"><svg viewBox="0 0 28 30"><rect x="1" y="5" width="26" height="20" fill="#bfdcf0" stroke="#4a5a6a" stroke-width="2"/><path d="M5 1v4M11 1v4M17 1v4M23 1v4M5 25v4M11 25v4M17 25v4M23 25v4" stroke="#4a5a6a" stroke-width="2"/></svg>INP_LVS</div></div>
      <div class="vgrip"></div>
      <div class="objects">
        <div class="thead cols"><span>Objects</span><span><svg viewBox="0 0 28 28"><use href="#info" width="26" height="26"/></svg></span><span>Layout</span><span>Reference</span></div>
        <div class="orow green"><div class="o0"><i class="ex dn"></i><svg viewBox="0 0 28 30"><rect x="1" y="5" width="26" height="20" fill="#fff" stroke="#444" stroke-width="2"/><path d="M5 1v4M11 1v4M17 1v4M23 1v4M5 25v4M11 25v4M17 25v4M23 25v4" stroke="#444" stroke-width="2"/></svg>INP_LVS</div><div></div><div>INP_LVS</div><div>INP_LVS</div></div>
        <div class="orow"><div class="o1"><i class="ex"></i><svg viewBox="0 0 28 30"><path d="M0 15h10M10 8h11l6 7-6 7H10z" fill="none" stroke="#444" stroke-width="2"/></svg>Pins</div></div>
        <div class="orow"><div class="o1"><i class="ex"></i><svg viewBox="0 0 28 30"><path d="M2 8h24M11 8v19" stroke="#444" stroke-width="2"/><circle cx="11" cy="8" r="5" fill="#444"/></svg>Nets</div></div>
        <div class="orow"><div class="o1"><i class="ex dn"></i><svg viewBox="0 0 28 30"><path d="M0 6h5v15M25 6h-5v15M13 21v7" fill="none" stroke="#444" stroke-width="2"/><path d="M1 21h23" stroke="#444" stroke-width="4"/></svg>Devices</div></div>
        <div class="orow green"><div class="o2"><i class="ex"></i><svg viewBox="0 0 28 30"><path d="M2 15h8M16 15h8" stroke="#444" stroke-width="2"/><path d="M10 4v22M16 4v22" stroke="#444" stroke-width="4"/></svg>rfcmim ⇔ RFCMIM</div><div></div><div>$1 / rfcmim [w=60, l=55, A=3.3k]</div><div>1 / RFCMIM [w=60, l=55, A=3.3k, P=0.23k, m=1, wfeed=5]</div></div>
        <div class="orow green"><div class="o2"><i class="ex"></i><svg viewBox="0 0 28 30"><path d="M0 15h5M23 15h4M5 10h18v9H5z" fill="none" stroke="#444" stroke-width="2"/></svg>rsil ⇔ RSIL</div><div></div><div>$2 / rsil [w=0.5, l=2.4, m=1]</div><div>3 / RSIL [w=0.5, l=2.4, m=1]</div></div>
      </div>
    </div>
  </div>
</section>
<script src="script.js"></script>
</body>
</html>
```
FILE: styles.css
```css
* { box-sizing: border-box; }
html, body { margin: 0; height: 100%; overflow: hidden; }
body { background: #0a6f94; font: 24px "DejaVu Sans", sans-serif; color: #141414; position: relative; white-space: nowrap; }
ul { list-style: none; margin: 0; padding: 0; }
svg { display: block; flex: none; }
.defs { position: absolute; width: 0; height: 0; }

/* window frames */
.klayout { position: absolute; inset: 0; background: #bebebe; border-radius: 8px; padding: 0 9px 0 12px; display: flex; flex-direction: column; overflow: hidden; }
.titlebar { height: 54px; flex: none; display: flex; align-items: center; }
.title { flex: 1; margin: 0; text-align: center; font-size: 27px; font-weight: bold; color: #696969; }
.sysmenu { width: 32px; height: 28px; border: 2px solid #000; border-top-width: 8px; background: #fff; }
.winbtns { display: flex; gap: 6px; padding-top: 2px; }
.klayout .title { padding-left: 140px; }
.winbtn { width: 54px; height: 36px; }

/* main window menu and toolbar */
.menubar { height: 41px; flex: none; background: #efefef; border-bottom: 2px solid #d0d0d0; display: flex; align-items: center; gap: 29px; padding-left: 20px; }
.menubar u { text-decoration-thickness: 2px; text-underline-offset: 4px; }
.toolbar { height: 113px; flex: none; background: linear-gradient(#fafafa, #eeeeee); border-bottom: 2px solid #b4b4b4; display: grid; padding-left: 4px; grid-template-rows: 111px;
  grid-template-columns: 100px 126px 20px 102px 104px 94px 22px 86px 24px 126px 84px 82px 90px 134px 110px 18px 116px 32px; }
.tool { height: 100px; margin: 7px 2px 0; display: flex; flex-direction: column; align-items: center; padding-top: 8px; line-height: 28px; gap: 12px; border-radius: 5px; }
.tool.off { color: #bebebe; }
.tool.pressed { background: #dadada; border: 2px solid #b0b0b0; padding-top: 6px; }
.tool.raised { background: linear-gradient(#fff, #f8f8f8); border: 2px solid #b8b8b8; padding-top: 6px; }
.ti { width: 44px; height: 44px; overflow: visible; }
.ti.wide { width: 48px; height: 48px; margin: -2px; }
.tsep { width: 2px; height: 75px; background: #d2d2d2; margin: 20px 0 0 10px; }
.drop { border: 7px solid transparent; border-top: 8px solid #666; border-bottom: 0; width: 0; height: 0; margin: 54px 0 0 4px; }
.drop:last-child { margin-left: 9px; }
.glyph-a { font: italic bold 30px "Liberation Serif", serif; text-anchor: middle; }
.glyph-c { font: bold 33px "Liberation Serif", serif; text-anchor: middle; }
.glyph-t { font: bold 26px "Liberation Serif", serif; text-anchor: middle; }

/* docks */
.work { flex: 1; min-height: 0; background: #efefef; display: flex; justify-content: space-between; }
.dock { display: flex; flex-direction: column; overflow: hidden; }
.dock.left { width: 493px; padding-right: 1px; }
.dock.right { width: 424px; }
.dockhead { height: 40px; flex: none; display: flex; align-items: center; justify-content: space-between; padding: 3px 4px 0 8px; }
.dockhead span { display: flex; gap: 6px; }
.dockhead svg { width: 22px; height: 22px; }
.dockhead.lib { height: 39px; }
.cells { height: 227px; flex: none; border: 2px solid #b4b4b4; background: #000; }
.cellrow { height: 30px; background: #2f8cc8; color: #fff; font-weight: bold; display: flex; align-items: center; gap: 22px; padding: 2px 0 0 8px; }
.cellrow svg { width: 12px; height: 18px; margin-top: -2px; }
.levels { height: 50px; flex: none; display: flex; align-items: center; padding: 2px 2px 0 10px; }
.lbl { width: 112px; }
.spin { height: 44px; border: 2px solid #a8a8a8; border-radius: 6px; background: #fff; display: flex; justify-content: space-between; align-items: center; padding-left: 9px; }
.spin b { font-weight: normal; }
.spin.a { width: 126px; }
.spin.b { width: 108px; margin-left: auto; }
.spin svg { width: 28px; height: 40px; background: #f6f6f6; border-left: 2px solid #b4b4b4; border-radius: 0 5px 5px 0; }
.dots { padding-left: 13px; }
.grip { height: 12px; flex: none; background: repeating-linear-gradient(90deg, #b4b4b4 0 2px, transparent 2px 6px) 232px 5px / 32px 2px no-repeat; }
.grip.low { height: 10px; background-position: 232px 4px; }
.combo { height: 46px; flex: none; border: 2px solid #a8a8a8; border-radius: 6px; background: linear-gradient(#fff, #ebebeb); display: flex; align-items: center; justify-content: space-between; padding: 2px 13px 0 8px; }
.dock.left > .combo { height: 45px; margin: 0 1px; }
.tri { width: 0; height: 0; border: 7px solid transparent; border-top: 7px solid #5a5a5a; border-bottom: 0; margin-top: -2px; }
.liblist { height: 1063px; flex: none; border: 2px solid #b4b4b4; background: #000; color: #fff; padding: 2px 0 0 54px; line-height: 30px; }
.dockhead.ed { padding-top: 5px; }
.edtabs { height: 50px; flex: none; display: flex; align-items: flex-end; }
.edtabs span { height: 46px; width: 205px; display: flex; align-items: center; justify-content: center; background: #e8e8e8; border: 2px solid #b4b4b4; border-bottom: 0; border-radius: 6px 6px 0 0; padding: 2px 2px 0 0; }
.edtabs .on { height: 50px; width: 160px; justify-content: flex-start; padding-left: 22px; background: #fcfcfc; }
.edpane { height: 210px; flex: none; border: 2px solid #a8a8a8; border-right: 0; display: flex; flex-direction: column; }
.edrow { display: flex; align-items: center; padding-left: 21px; margin-top: 20px; }
.edrow span { width: 82px; }
.input { width: 400px; height: 46px; border: 2px solid #a8a8a8; border-radius: 6px; background: #fff; line-height: 43px; padding-left: 6px; }
.edext { height: 50px; line-height: 60px; padding-left: 21px; }
.edgroup { flex: 1; margin-left: 22px; border: 2px solid #d0d0d0; border-bottom: 0; background: #ebebeb; display: flex; align-items: center; padding: 0 0 0 10px; border-radius: 5px 0 0 0; }
.edgroup span { width: 132px; padding-top: 8px; }
.edgroup .combo { width: 300px; margin-top: 8px; }
.hscroll { height: 28px; border-top: 2px solid #b4b4b4; background: linear-gradient(#fff, #ececec); margin-left: 2px; }
.hscroll svg { width: 28px; height: 26px; border-right: 2px solid #b4b4b4; }
.status { display: flex; padding: 12px 0 0 12px; }
.status span { padding-left: 13px; width: 242px; }

/* layout view */
.view { width: 2875px; display: flex; flex-direction: column; margin-left: -1px; }
.viewtab { height: 63px; margin-top: 3px; flex: none; border: 2px solid #acacac; border-bottom: 0; border-radius: 6px 6px 0 0; background: linear-gradient(#fafafa, #eeeeee); display: flex; align-items: center; padding-right: 32px; }
.viewtab span { flex: 1; text-align: center; padding-left: 8px; }
.viewtab svg { width: 24px; height: 24px; margin-top: -2px; }
.layout { width: 2875px; height: 1755px; }
.cap { font: bold 17px "DejaVu Sans", sans-serif; fill: #fff; }
.inlabel { font: 24px "DejaVu Sans", sans-serif; fill: #3ab6ff; }

/* layer list */
.layers { flex: 1; border: 2px solid #b4b4b4; background: #000; color: #fff; font-weight: bold; }
.layers li { height: 32px; display: flex; align-items: center; gap: 16px; padding: 3px 0 0 6px; }
.layers li.sel { background: #2f8cc8; }
.layers svg { width: 64px; height: 30px; margin-top: -2px; fill: none; stroke-width: 2px; background: #000; }
.layers .sel svg { background: #0f2a3c; }
.c-act { stroke: #00ff00; } .c-well { stroke: #ff8000; } .c-psd { stroke: #ccb899; } .c-cont { stroke: #00ffff; }
.c-m1 { stroke: #39bfff; } .sel .c-m1 { stroke: #36a0e0; } .c-v1 { stroke: #ccccff; } .c-m2 { stroke: #ccccd9; }
.c-v2 { stroke: #ff3736; } .c-m3 { stroke: #d80000; } .c-mim { stroke: #268c6b; } .c-vm { stroke: #ffe6bf; }
.c-v3 { stroke: #9ba940; } .c-m4 { stroke: #93e837; } .c-v4 { stroke: #deac5e; } .c-m5 { stroke: #dcd146; }

/* schematic editor */
.xschem { position: absolute; left: 2016px; top: 1044px; width: 1820px; height: 985px; background: #bebebe; border-radius: 8px 8px 0 0; padding: 0 9px 0 12px; box-shadow: 0 0 16px rgba(0,0,0,.35); display: flex; flex-direction: column; }
.xschem .titlebar { height: 54px; }
.xschem .title { padding: 0 0 2px 142px; }
.xbody { background: #fff; }
.xmenu { height: 46px; border-top: 4px solid #fff; border-bottom: 4px solid #888; border-right: 3px solid #888; border-left: 4px solid #fff; background: #e4e4e4; display: flex; align-items: stretch; font-size: 26.670px; line-height: 36px; color: #101010; }
.xmenu span { padding: 0 8px; }
.xmenu i { flex: 1; }
.xmenu .lay { background: #8ade00; }
.xmenu .net { background: #008000; padding: 0 5.500px 0 6.500px; }
.xmenu .sim { padding: 0 7px; }
.xmenu .wav { background: #ffa500; margin: 2px 0; line-height: 32px; padding: 0 4px; }
.xtools { height: 52px; display: flex; }
.xtools svg { width: 52px; height: 52px; }
.xtools i { width: 4px; margin: 0 2px; background: #d9d9d9; }
.xtools b { flex: 1; }
.l2, .l3, .l4, .l5 { fill: none; stroke: #000; stroke-width: 2.500px; }
.l3 { stroke-width: 3px; } .l4 { stroke-width: 4px; } .l5 { stroke-width: 5px; }
.gr { stroke: #777; }
.xtabs { height: 42px; background: #e4e4e4; display: flex; gap: 2px; padding-left: 2px; font-size: 26.400px; line-height: 35px; }
.xtabs span { height: 42px; padding: 0 3px; border: 2px solid #f4f4f4; border-right-color: #888; border-bottom-color: #888; width: 205px; }
.xtabs .on { background: #98fb98; border-color: #98fb98 #66aa66 #66aa66 #98fb98; width: 160px; padding: 0 4px; }
.xtabs .plus { width: 44px; text-align: center; }
.sch { width: 1799px; height: 791px; }
.pins { font: 19px "DejaVu Sans", sans-serif; fill: #00b4d8; }
.ann { font: 11.500px "DejaVu Sans", sans-serif; }
.ann.y { fill: #8a8a00; } .ann.w { fill: #aaa; } .ann.r { fill: #a00000; }

/* netlist browser */
.netlist { position: absolute; left: 300px; top: 1208px; width: 1725px; height: 821px; display: flex; flex-direction: column; box-shadow: 0 0 24px rgba(0,0,0,.5); border-radius: 8px 8px 0 0; background: #ccc; }
.ntitle { height: 54px; background: linear-gradient(#fff 60%, #e4e4e4); border-radius: 8px 8px 0 0; text-align: center; font-size: 27px; font-weight: bold; line-height: 53px; color: #000; padding-right: 5px; }
.nbody { flex: 1; margin: 0 13px 0 12px; padding: 18px 18px 0; background: #efefef; display: flex; flex-direction: column; min-height: 0; overflow: hidden; }
.frow { display: grid; grid-template-columns: 194px 1288px 64px 118px; }
.frow label { line-height: 47px; height: 46px; }
.frow.two { margin-top: 12px; }
.frow.two label { padding-left: 31px; }
.filebtn { grid-column: 4; height: 44px; border: 2px solid #a8a8a8; border-radius: 5px; background: linear-gradient(#fff, #ebebeb); padding: 0 2px 0 14px; line-height: 39px; display: flex; justify-content: space-between; align-items: flex-end; }
.tri.sm { border-width: 5px; border-bottom: 0; border-top-width: 5px; margin-bottom: 6px; }
.nbody hr { height: 4px; width: 100%; flex: none; border: 0; background: linear-gradient(#a0a0a0 50%, #fff 50%); margin: 32px 0 14px; }
.nbar { height: 46px; flex: none; display: flex; align-items: center; gap: 24px; padding-left: 10px; }
.nbar svg { width: 28px; height: 28px; }
.find { margin-left: auto; width: 500px; height: 46px; border: 2px solid #a8a8a8; border-radius: 6px; background: #fff; display: flex; align-items: center; padding: 0 8px 0 9px; color: #8c8c8c; }
.find span { flex: 1; padding: 1px 0 0 3px; }
.nbar .mag { margin: 0 23px 0 -11px; }
.ntabs { height: 51px; flex: none; margin-top: 10px; display: flex; align-items: flex-end; position: relative; z-index: 1; }
.ntabs span { height: 47px; border: 2px solid #b4b4b4; border-left-width: 0; border-bottom: 0; background: #e8e8e8; display: flex; align-items: center; justify-content: center; border-radius: 5px 5px 0 0; padding-top: 1px; }
.ntabs .a { width: 127px; border-left-width: 2px; } .ntabs .b { width: 174px; } .ntabs .c { width: 244px; } .ntabs .d { width: 90px; }
.ntabs .on { height: 53px; margin-bottom: -2px; background: #fcfcfc; border-left-width: 2px; padding: 0 2px 0 0; }
.npane { flex: 1; min-height: 0; border: 2px solid #acacac; border-bottom: 0; background: #fbfbfb; display: flex; padding: 9px 10px 0; }
.circuits { width: 140px; border: 2px solid #b4b4b4; background: #fff; overflow: hidden; }
.vgrip { width: 8px; background: repeating-linear-gradient(#b4b4b4 0 2px, transparent 2px 6px) 4px 248px / 2px 32px no-repeat; }
.objects { flex: 1; border: 2px solid #b4b4b4; background: #fff; overflow: hidden; }
.thead { height: 41px; background: linear-gradient(#fdfdfd, #ebebeb); border-bottom: 2px solid #acacac; line-height: 44px; padding-left: 4px; }
.crow { height: 38px; background: #2f8cc8; color: #fff; display: flex; align-items: center; padding-left: 48px; gap: 12px; }
.crow svg, .orow svg { width: 28px; height: 30px; }
.cols, .orow { display: grid; grid-template-columns: 300px 50px 300px 1fr; }
.cols { padding: 0; }
.cols span { padding-left: 4px; border-right: 2px solid #c8c8c8; height: 39px; }
.cols span:last-child { border: 0; }
.cols svg { width: 28px; height: 28px; margin: 7px 0 0 3px; }
.orow { height: 38px; line-height: 39px; }
.orow > div { overflow: hidden; padding-left: 4px; }
.green { color: #00be00; }
.o0, .o1, .o2 { display: flex; align-items: center; }
.orow .o0 { padding-left: 12px; } .orow .o1 { padding-left: 52px; } .orow .o2 { padding-left: 92px; }
.o0 svg { margin: 0 12px 0 20px; }
.o1 svg, .o2 svg { margin: 0 12px 0 20px; }
.ex { width: 16px; height: 16px; flex: none; background: #4c4c4c; clip-path: polygon(15% 0, 85% 50%, 15% 100%); }
.ex.dn { clip-path: polygon(0 15%, 100% 15%, 50% 90%); }
```
FILE: script.js
```js
// Dotted background grid of the layout view
let d = '';
for (let x = 605.5; x < 3391; x += 113.44) d += `M${Math.round(x)} 285V2029`;
for (let y = 330; y < 2029; y += 113) d += `M524 ${y + 1}H3388`;
document.getElementById('grid').setAttribute('d', d);

// Contact clusters around the guard ring
let c = '';
for (let i = 0; i < 7; i++) {
  const x = 1714 + i * 112.7 - 112.7 + (i ? 0 : 22);
  const w = i ? 58 : 36;
  c += `M${Math.round(x)} 324h${w}v10h-${w}z`;
  c += `M${Math.round(x)} 1096h${w}v14h-${w}z`;
  c += `M1624 ${Math.round(364 + i * 112)}h14v56h-14z`;
}
const contacts = document.getElementById('contacts');
contacts.setAttribute('d', c);
contacts.setAttribute('fill', 'url(#pc)');
const base = contacts.cloneNode();
base.removeAttribute('id');
base.setAttribute('fill', '#f00');
contacts.before(base);

// Snap grid of the schematic
let s = '';
for (let y = 1240; y < 2029; y += 21.54) s += `M2028 ${Math.round(y)}H3827`;
document.getElementById('dots').setAttribute('d', s);
```
